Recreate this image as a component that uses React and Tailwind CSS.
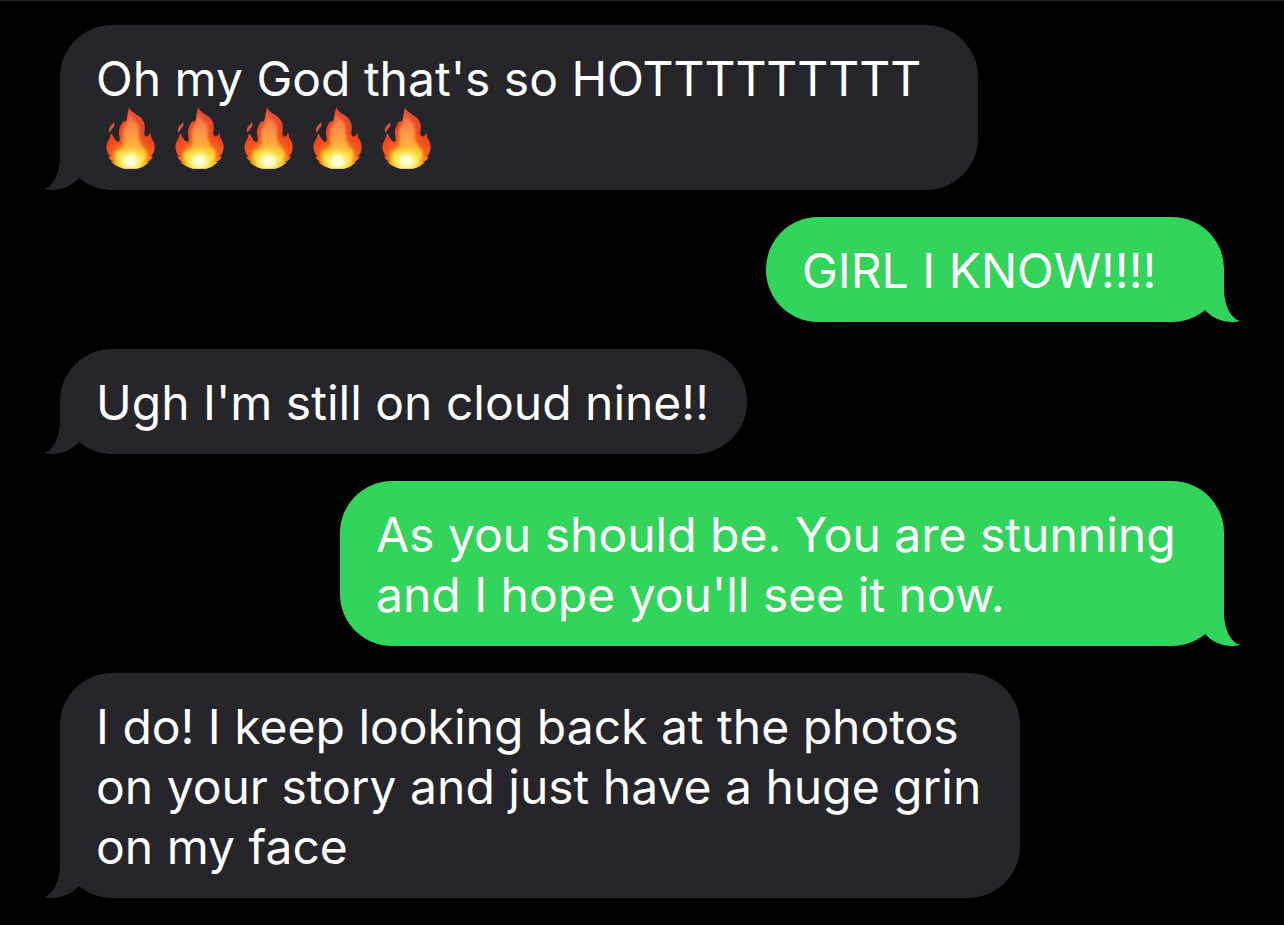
import React from "react";

const messages = [
  {
    from: "them",
    width: "w-[918px]",
    lines: ["Oh my God that's so HOTTTTTTTTT"],
    fires: 5,
  },
  { from: "me", width: "w-[458px]", lines: ["GIRL I KNOW!!!!"] },
  {
    from: "them",
    width: "w-[687px]",
    lines: ["Ugh I'm still on cloud nine!!"],
  },
  {
    from: "me",
    width: "w-[884px]",
    lines: ["As you should be. You are stunning", "and I hope you'll see it now."],
  },
  {
    from: "them",
    width: "w-[960px]",
    lines: [
      "I do! I keep looking back at the photos",
      "on your story and just have a huge grin",
      "on my face",
    ],
  },
];

const FireGradients = () => (
  <svg className="absolute h-0 w-0" aria-hidden="true">
    <defs>
      <radialGradient
        id="fire-outer"
        gradientUnits="userSpaceOnUse"
        cx="25"
        cy="56"
        r="56"
      >
        <stop offset="0" stopColor="#ffe14a" />
        <stop offset="0.24" stopColor="#ffb52a" />
        <stop offset="0.38" stopColor="#f8601c" />
        <stop offset="0.55" stopColor="#ee4420" />
        <stop offset="1" stopColor="#e2503c" />
      </radialGradient>
      <linearGradient id="fire-inner" x1="0" y1="0" x2="0" y2="1">
        <stop offset="0" stopColor="#f4683f" />
        <stop offset="0.35" stopColor="#fd9447" />
        <stop offset="0.6" stopColor="#ffb039" />
        <stop offset="0.8" stopColor="#ffdc35" />
        <stop offset="1" stopColor="#ffef4e" />
      </linearGradient>
      <radialGradient id="fire-core">
        <stop offset="0" stopColor="#fffff4" />
        <stop offset="0.35" stopColor="#fffdc4" stopOpacity="0.95" />
        <stop offset="1" stopColor="#ffe93c" stopOpacity="0" />
      </radialGradient>
      <filter id="fire-soft" x="-20%" y="-20%" width="140%" height="140%">
        <feGaussianBlur stdDeviation="1.5" />
      </filter>
      <clipPath id="fire-clip">
        <path d="M23.5 0.5C24.5 5 30 6.5 34 10C38.5 14 39.5 19 38.5 24C38 27 38.5 29 40 29.5C42.5 29.5 43.5 28 44 25.5C45 27 44.6 29 45.5 31C47.5 34 49 37 48.7 41C48.4 45 47 47 44.5 50L47 49C46 52.5 43.5 54 40.5 55L43 55C40 58.5 36 60.5 31 61.8H18C13 60.5 8 58 5 54.5L8 55C4.5 53.5 3 51.5 2 49L4.5 50C1.5 46.5 0.3 43 0.5 39C0.8 34.5 4.5 31.5 4.8 26.5C7 27.5 7 30 8.5 31.5C9.5 33.5 11 35 13 35C14.8 32.5 12.5 29 13 24C13.4 20 15.5 17 17 14.5C18.5 15 19 14 19.7 14.7C22 10 21 5 23.5 0.5Z" />
      </clipPath>
    </defs>
  </svg>
);

const Fire = () => (
  <svg
    viewBox="0 0 49 62"
    className="h-[62px] w-[49px] shrink-0"
    role="img"
    aria-label="fire"
  >
    <g clipPath="url(#fire-clip)">
      <rect width="49" height="62" fill="url(#fire-outer)" />
      <path
        fill="url(#fire-inner)"
        filter="url(#fire-soft)"
        d="M23 6C25 12 31 13 32.5 19C34 25 32 31 34 35C36 39 37 42 40 43C41 49 37 58 31 60H18C11 57 8 52 9 44C13 45 18 41 17.5 35C17 29 16 24 19 19C22 15 22 11 23 6Z"
      />
      <ellipse cx="24.5" cy="54" rx="15" ry="14" fill="url(#fire-core)" />
    </g>
    <path
      fill="#dd5440"
      d="M8 14.5C9.2 17.5 8.2 20 6 22L3.5 25.7C2.2 22.5 3.2 20 5.5 18C7 16.7 7.8 16 8 14.5Z"
    />
  </svg>
);

const Tail = ({ mine }) => (
  <svg
    viewBox="0 0 40 52"
    className={
      mine
        ? "absolute -right-4 bottom-0 h-[52px] w-10 -scale-x-100 text-[#32d45b]"
        : "absolute -left-4 bottom-0 h-[52px] w-10 text-[#26262a]"
    }
    aria-hidden="true"
  >
    <path
      fill="currentColor"
      d="M16 0V18C16 34 10 48 0 51C12 54 26 50 35 40L40 20V0Z"
    />
  </svg>
);

const Bubble = ({ message }) => {
  const mine = message.from === "me";

  return (
    <li
      className={`relative max-w-full rounded-[52px] pt-6 pb-[21px] pl-9 ${
        message.width
      } ${mine ? "self-end bg-[#32d45b]" : "self-start bg-[#26262a]"}`}
    >
      <Tail mine={mine} />
      <p className="relative">
        {message.lines.map((line) => (
          <span key={line} className="block whitespace-nowrap">
            {line}
          </span>
        ))}
      </p>
      {message.fires && (
        <div className="relative flex h-[60px] items-end gap-5 pl-2.5">
          {Array.from({ length: message.fires }, (_, i) => (
            <Fire key={i} />
          ))}
        </div>
      )}
    </li>
  );
};

const App = () => {
  return (
    <main className="min-h-screen overflow-hidden border-t border-[#222222] bg-black font-['Inter',sans-serif] text-5xl/[60px] text-white">
      <FireGradients />
      <ul className="flex flex-col gap-[27px] px-[60px] pt-6 pb-[27px]">
        {messages.map((message, index) => (
          <Bubble key={index} message={message} />
        ))}
      </ul>
    </main>
  );
};

export default App;
